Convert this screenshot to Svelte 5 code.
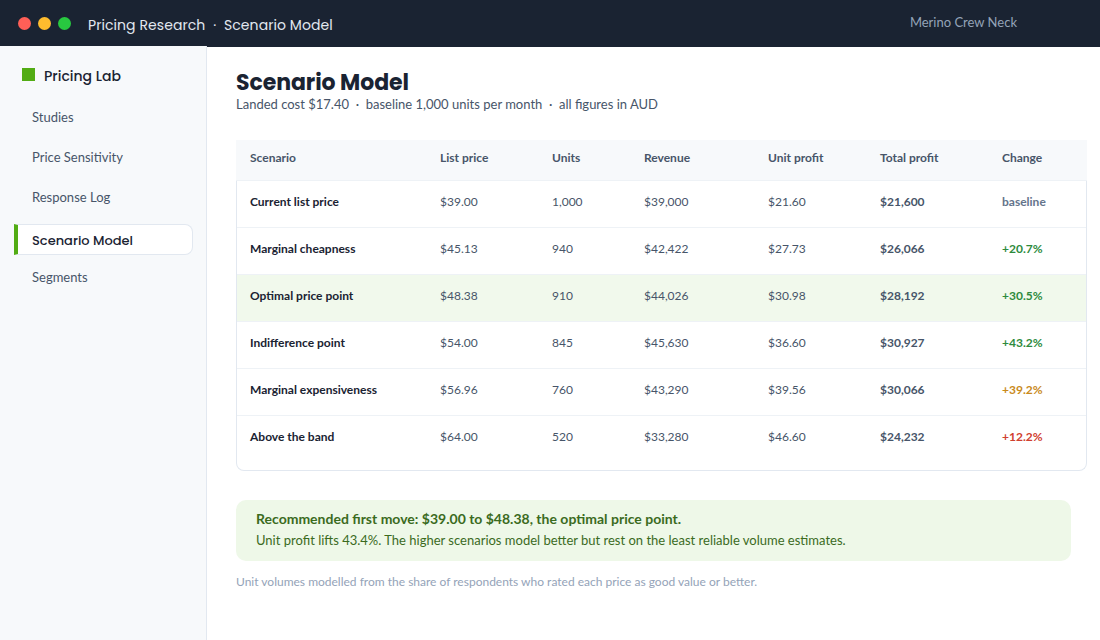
<script>
  const columns = ['Scenario', 'List price', 'Units', 'Revenue', 'Unit profit', 'Total profit', 'Change'];

  const rows = [
    { name: 'Current list price', price: '$39.00', units: '1,000', revenue: '$39,000', unit: '$21.60', total: '$21,600', change: 'baseline', tone: 'base' },
    { name: 'Marginal cheapness', price: '$45.13', units: '940', revenue: '$42,422', unit: '$27.73', total: '$26,066', change: '+20.7%', tone: 'good' },
    { name: 'Optimal price point', price: '$48.38', units: '910', revenue: '$44,026', unit: '$30.98', total: '$28,192', change: '+30.5%', tone: 'good', best: true },
    { name: 'Indifference point', price: '$54.00', units: '845', revenue: '$45,630', unit: '$36.60', total: '$30,927', change: '+43.2%', tone: 'good' },
    { name: 'Marginal expensiveness', price: '$56.96', units: '760', revenue: '$43,290', unit: '$39.56', total: '$30,066', change: '+39.2%', tone: 'warn' },
    { name: 'Above the band', price: '$64.00', units: '520', revenue: '$33,280', unit: '$46.60', total: '$24,232', change: '+12.2%', tone: 'bad' }
  ];

  const nav = ['Studies', 'Price Sensitivity', 'Response Log', 'Scenario Model', 'Segments'];
  const current = 'Scenario Model';
</script>

<div class="app">
  <header class="topbar">
    <div class="dots">
      <span class="dot red"></span>
      <span class="dot amber"></span>
      <span class="dot green"></span>
    </div>
    <div class="crumbs">Pricing Research <span class="sep">·</span> Scenario Model</div>
    <div class="product">Merino Crew Neck</div>
  </header>

  <div class="body">
    <aside class="sidebar">
      <div class="brand"><span class="mark"></span>Pricing Lab</div>
      <nav class="nav">
        {#each nav as item}
          <div class="nav-item" class:active={item === current}>{item}</div>
        {/each}
      </nav>
    </aside>

    <main class="main">
      <h1>Scenario Model</h1>
      <p class="sub">Landed cost $17.40 &nbsp;·&nbsp; baseline 1,000 units per month &nbsp;·&nbsp; all figures in AUD</p>

      <div class="card">
        <div class="row head">
          {#each columns as col}
            <div class="cell">{col}</div>
          {/each}
        </div>
        {#each rows as r}
          <div class="row" class:best={r.best}>
            <div class="cell name">{r.name}</div>
            <div class="cell">{r.price}</div>
            <div class="cell">{r.units}</div>
            <div class="cell">{r.revenue}</div>
            <div class="cell">{r.unit}</div>
            <div class="cell total">{r.total}</div>
            <div class="cell change {r.tone}">{r.change}</div>
          </div>
        {/each}
      </div>

      <div class="callout">
        <div class="callout-title">Recommended first move: $39.00 to $48.38, the optimal price point.</div>
        <div class="callout-text">Unit profit lifts 43.4%. The higher scenarios model better but rest on the least reliable volume estimates.</div>
      </div>

      <p class="note">Unit volumes modelled from the share of respondents who rated each price as good value or better.</p>
    </main>
  </div>
</div>

<style>
  :global(body) {
    margin: 0;
    background: #fff;
  }

  .app {
    width: 1100px;
    height: 640px;
    display: flex;
    flex-direction: column;
    overflow: hidden;
    font-family: Lato, "Liberation Sans", sans-serif;
    color: #1a2332;
  }

  .topbar {
    height: 47px;
    flex: none;
    background: #1a2332;
    display: flex;
    align-items: center;
    padding: 0 18px;
    box-sizing: border-box;
  }

  .dots {
    display: flex;
    gap: 7px;
    margin-right: 17px;
  }

  .dot {
    width: 13px;
    height: 13px;
    border-radius: 50%;
  }

  .red { background: #ff5f57; }
  .amber { background: #febc2e; }
  .green { background: #28c840; }

  .crumbs {
    font-family: Poppins, Inter, sans-serif;
    font-size: 14px;
    line-height: 20px;
    margin-top: 2px;
    letter-spacing: 0.07px;
    color: #e2e8f0;
  }

  .sep {
    margin: 0 4px;
  }

  .product {
    margin-left: auto;
    margin-right: 65px;
    margin-top: -3px;
    font-size: 13px;
    color: #94a3b8;
  }

  .body {
    flex: 1;
    display: flex;
    min-height: 0;
  }

  .sidebar {
    width: 207px;
    margin-top: -1px;
    flex: none;
    box-sizing: border-box;
    background: #f7f9fb;
    border-right: 1px solid #e2e8f0;
    padding: 20px 13px 0 14px;
  }

  .brand {
    display: flex;
    align-items: center;
    gap: 9px;
    padding-left: 8px;
    height: 20px;
    font-family: Poppins, Inter, sans-serif;
    font-size: 14px;
    font-weight: 500;
    color: #1a2332;
  }

  .mark {
    width: 13px;
    height: 13px;
    margin-top: -3px;
    background: #52ac14;
  }

  .nav {
    margin-top: 15px;
    display: flex;
    flex-direction: column;
    gap: 8px;
  }

  .nav-item {
    height: 32px;
    line-height: 32px;
    padding-left: 18px;
    font-size: 13px;
    color: #475569;
  }

  .nav-item.active {
    height: 31px;
    line-height: 31px;
    margin: 3px 0 -2px;
    box-sizing: border-box;
    padding-left: 14px;
    background: #fff;
    border: 1px solid #e2e8f0;
    border-left: 4px solid #52ac14;
    border-radius: 0 8px 8px 0;
    font-family: Poppins, Inter, sans-serif;
    font-weight: 500;
    color: #1a2332;
  }

  .main {
    flex: 1;
    min-width: 0;
    padding: 21px 29px 0;
  }

  h1 {
    margin: 0;
    font-family: Poppins, Inter, sans-serif;
    font-size: 22px;
    font-weight: 700;
    line-height: 30px;
    letter-spacing: -0.07px;
    color: #1a2332;
  }

  .sub {
    margin: -3px 0 0;
    font-size: 13px;
    line-height: 18px;
    color: #475569;
  }

  .card {
    width: 851px;
    box-sizing: border-box;
    margin-top: 27px;
    padding-bottom: 7px;
    border: 1px solid #e2e8f0;
    border-radius: 0 0 8px 8px;
    border-top: 0;
    background: #fff;
  }

  .row {
    display: grid;
    grid-template-columns: 189px 112px 92px 124px 112px 122px 98px;
    height: 47px;
    padding-top: 13px;
    line-height: 15px;
    font-size: 12px;
    color: #475569;
    border-bottom: 1px solid #eef2f6;
    box-sizing: border-box;
  }

  .row:last-child {
    border-bottom: 0;
  }

  .row.head {
    height: 41px;
    padding-top: 10px;
    margin: 0 -1px;
    grid-template-columns: 190px 112px 92px 124px 112px 122px 99px;
    background: #f7f9fb;
    font-weight: 700;
    color: #475569;
  }

  .row.best {
    background: #f1f9ec;
  }

  .cell {
    padding-left: 14px;
    white-space: nowrap;
  }

  .cell.name {
    padding-left: 13px;
    font-weight: 700;
    color: #1a2332;
  }

  .total {
    font-weight: 700;
  }

  .change {
    font-weight: 700;
  }

  .base { color: #64748b; }
  .good { color: #2e8b3d; }
  .warn { color: #c98a1b; }
  .bad { color: #d0402f; }

  .callout {
    margin-top: 29px;
    height: 61px;
    box-sizing: border-box;
    padding: 9px 20px;
    background: #eef8e8;
    border-radius: 10px;
    color: #3b6b1e;
  }

  .callout-title {
    font-size: 14px;
    line-height: 20px;
    font-weight: 700;
  }

  .callout-text {
    font-size: 13px;
    line-height: 22px;
  }

  .note {
    margin: 13px 0 0;
    font-size: 12px;
    line-height: 16px;
    color: #94a3b8;
  }
</style>
